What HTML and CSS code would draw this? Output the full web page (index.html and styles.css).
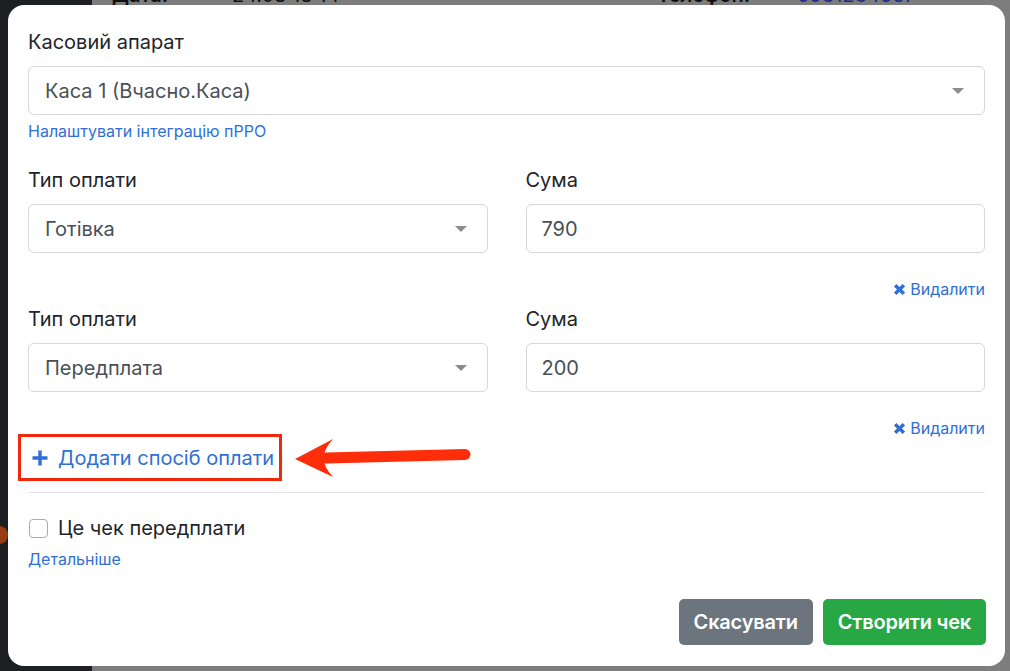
FILE: index.html
```html
<!DOCTYPE html>
<html lang="uk">
<head>
<meta charset="utf-8">
<title>Створити чек</title>
<link rel="stylesheet" href="styles.css">
</head>
<body>
<div class="page">
  <aside class="sidebar"><span class="blob"></span></aside>
  <main class="backdrop">
    <div class="bg-row">
      <span class="bg-key">Дата:</span>
      <span class="bg-val">24.08 18:14</span>
      <span class="bg-key bg-phone">Телефон:</span>
      <span class="bg-link">0931234567</span>
    </div>
  </main>
</div>

<div class="modal">
  <div class="modal-body">
    <div class="group">
      <div class="label">Касовий апарат</div>
      <div class="select"><span>Каса 1 (Вчасно.Каса)</span><i class="caret"></i></div>
      <a class="small-link" href="#">Налаштувати інтеграцію пРРО</a>
    </div>

    <div class="pay-row">
      <div class="col">
        <div class="label">Тип оплати</div>
        <div class="select"><span>Готівка</span><i class="caret"></i></div>
      </div>
      <div class="col">
        <div class="label">Сума</div>
        <div class="input">790</div>
      </div>
    </div>
    <div class="remove-line"><a class="remove" href="#"><svg class="x-icon" viewBox="0 0 12 12"><path d="M2 2 L10 10 M10 2 L2 10"/></svg>Видалити</a></div>

    <div class="pay-row">
      <div class="col">
        <div class="label">Тип оплати</div>
        <div class="select"><span>Передплата</span><i class="caret"></i></div>
      </div>
      <div class="col">
        <div class="label">Сума</div>
        <div class="input">200</div>
      </div>
    </div>
    <div class="remove-line"><a class="remove" href="#"><svg class="x-icon" viewBox="0 0 12 12"><path d="M2 2 L10 10 M10 2 L2 10"/></svg>Видалити</a></div>

    <div class="add-wrap">
      <a class="add-box" href="#"><svg class="plus-icon" viewBox="0 0 16 16"><path d="M8 0.5 V15.5 M0.5 8 H15.5"/></svg>Додати спосіб оплати</a>
      <svg class="arrow" viewBox="0 0 185 50" width="185" height="50">
        <line x1="36" y1="24" x2="175" y2="20.5" stroke="#ff2d0a" stroke-width="11" stroke-linecap="round"/>
        <path d="M5 25 L43 5 Q33 16 34 24 Q33 32 43 43 Z" fill="#ff2d0a"/>
      </svg>
    </div>

    <hr class="divider">

    <label class="check"><span class="box"></span>Це чек передплати</label>
    <a class="small-link more" href="#">Детальніше</a>
  </div>
  <div class="modal-footer">
    <button class="btn btn-gray">Скасувати</button>
    <button class="btn btn-green">Створити чек</button>
  </div>
</div>
</body>
</html>
```

FILE: styles.css
```css
* { box-sizing: border-box; }
html, body { margin: 0; padding: 0; }
body {
  width: 1010px;
  height: 671px;
  overflow: hidden;
  font-family: "Inter", "Liberation Sans", sans-serif;
  position: relative;
  background: #7d7d7d;
}
.page {
  display: flex;
  height: 671px;
}
.sidebar {
  width: 92px;
  background: #1e1f23;
  position: relative;
}
.blob {
  position: absolute;
  left: -8px;
  top: 526px;
  width: 16px;
  height: 18px;
  border-radius: 50%;
  background: #9a3c12;
}
.backdrop {
  flex: 1;
  background: #7d7d7d;
}
.bg-row {
  display: flex;
  margin-top: -15px;
  font-size: 20px;
  line-height: 20px;
  color: #111;
  font-weight: 600;
}
.bg-key { margin-left: 20px; width: 120px; }
.bg-val { font-weight: 400; width: 300px; }
.bg-phone { margin-left: 125px; width: 140px; }
.bg-link { color: #1d2a8a; font-weight: 400; }

.modal {
  position: absolute;
  left: 8px;
  top: 5px;
  width: 997px;
  height: 661px;
  background: #fff;
  border-radius: 16px;
  display: flex;
  flex-direction: column;
}
.modal-body {
  padding: 22px 20px 0 20px;
  flex: 1;
}
.label {
  font-size: 20px;
  line-height: 30px;
  color: #212529;
  margin-bottom: 9px;
}
.select, .input {
  height: 49px;
  border: 1px solid #d4d7db;
  border-radius: 6px;
  display: flex;
  align-items: center;
  padding: 0 16px;
  font-size: 20px;
  color: #495057;
}
.input { padding-left: 15px; }
.select span { flex: 1; }
.caret {
  width: 0;
  height: 0;
  border-left: 6px solid transparent;
  border-right: 6px solid transparent;
  border-top: 6px solid #8c8c8c;
  margin-right: 4px;
}
.small-link {
  display: block;
  font-size: 16px;
  line-height: 22px;
  color: #2f6fd6;
  text-decoration: none;
  margin-top: 5px;
}
.group { margin-bottom: 23px; }
.pay-row {
  display: grid;
  grid-template-columns: 1fr 1fr;
  column-gap: 38px;
}
.remove-line {
  display: flex;
  justify-content: flex-end;
  margin-top: 24px;
  margin-bottom: 3px;
  height: 24px;
  align-items: center;
}
.remove {
  display: flex;
  align-items: center;
  gap: 4px;
  font-size: 16px;
  color: #2f6fd6;
  text-decoration: none;
}
.x-icon {
  width: 13px;
  height: 13px;
  stroke: #2f6fd6;
  stroke-width: 3.2;
  fill: none;
}
.add-wrap {
  position: relative;
  margin-top: -9px;
  margin-left: -10px;
  height: 47px;
}
.add-box {
  display: inline-flex;
  align-items: center;
  gap: 10px;
  height: 47px;
  padding: 0 5px 0 11px;
  border: 3px solid #f0290c;
  font-size: 20px;
  color: #2f6fd6;
  text-decoration: none;
}
.plus-icon {
  width: 16px;
  height: 16px;
  stroke: #2f6fd6;
  stroke-width: 3.4;
  fill: none;
}
.arrow {
  position: absolute;
  left: 272px;
  top: 0;
}
.divider {
  border: 0;
  border-top: 1px solid #e3e5e8;
  margin: 11px 0 0 0;
}
.check {
  display: flex;
  align-items: center;
  gap: 10px;
  font-size: 20px;
  line-height: 30px;
  color: #212529;
  margin-top: 20px;
}
.box {
  width: 19px;
  height: 19px;
  border: 1px solid #a9adb2;
  border-radius: 4px;
  margin-left: 1px;
}
.more { margin-top: 5px; }
.modal-footer {
  display: flex;
  justify-content: flex-end;
  gap: 10px;
  padding: 0 19px 21px 0;
}
.btn {
  height: 46px;
  border: 0;
  border-radius: 5px;
  padding: 0 15px;
  font-family: inherit;
  font-size: 20px;
  font-weight: 600;
  letter-spacing: -0.2px;
  color: #fff;
}
.btn-gray { background: #6c757d; }
.btn-green { background: #28a745; }
```
